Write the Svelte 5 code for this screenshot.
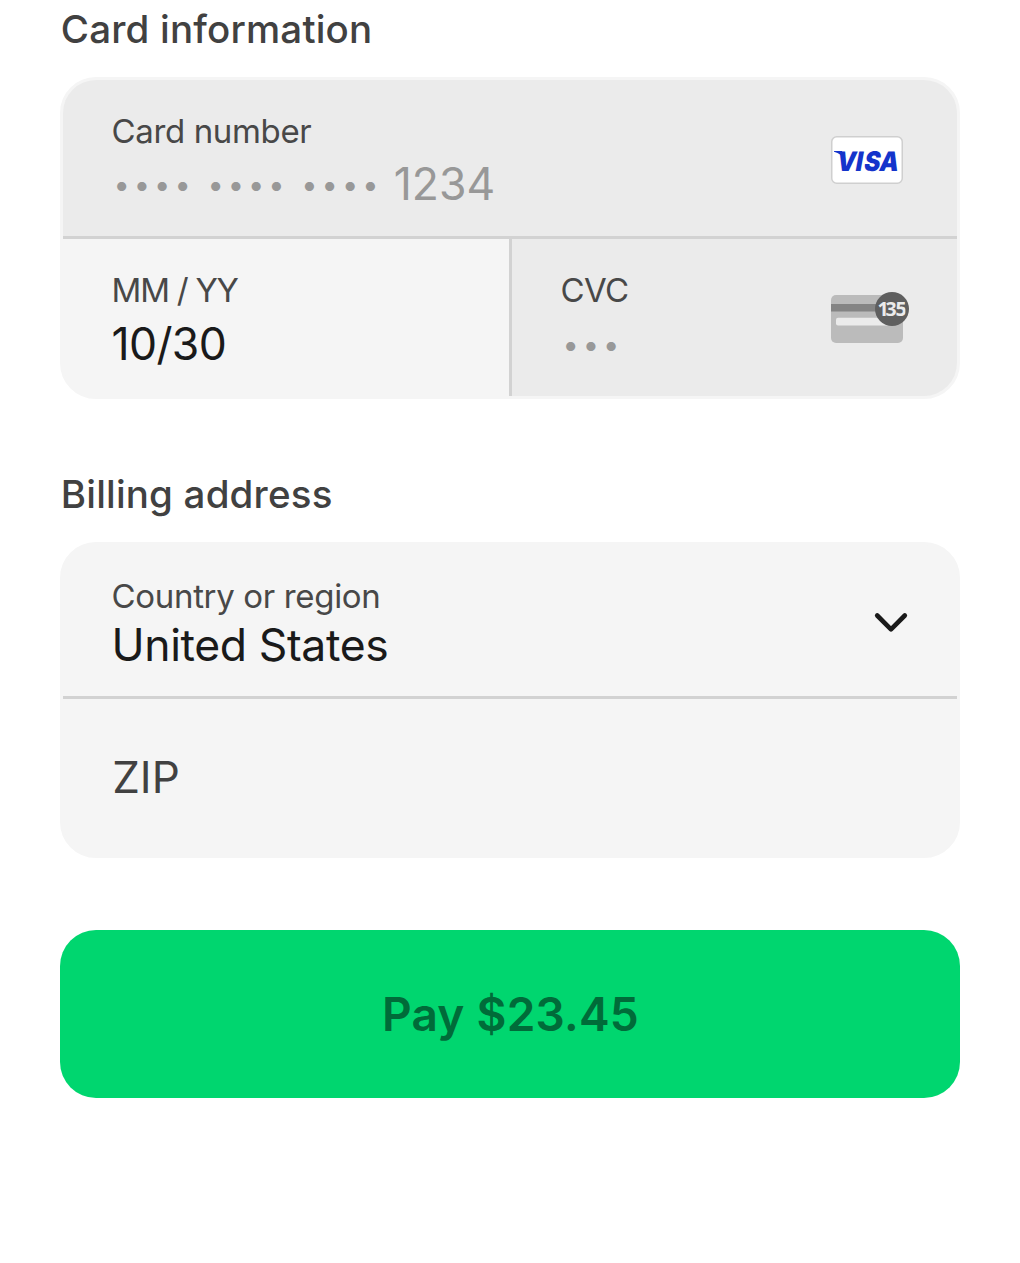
<script>
  const card = { last4: '1234', expiry: '10/30' };
  const billing = { country: 'United States' };
  const total = '$23.45';
</script>

<main class="checkout">
  <section>
    <h2>Card information</h2>
    <div class="group">
      <div class="field locked number">
        <div class="text">
          <span class="label">Card number</span>
          <span class="value masked">
            <span class="dots">•••• •••• ••••</span>
            <span class="digits">{card.last4}</span>
          </span>
        </div>
        <svg class="brand" width="72" height="48" viewBox="0 0 72 48" aria-label="Visa">
          <rect x="0.75" y="0.75" width="70.5" height="46.5" rx="5" fill="#fff" stroke="#cfcfcf" stroke-width="1.5" />
          <path d="M3 15H11L14 24Q10.5 17.6 3 15.8Z" fill="#1434cb" />
          <text class="visa" transform="matrix(0.9 0 -0.18 1 0 34.7)" x="5 26.2 35.6 52.4" y="0">VISA</text>
        </svg>
      </div>
      <div class="split">
        <div class="field expiry">
          <div class="text">
            <span class="label mmyy">MM / YY</span>
            <span class="value date">{card.expiry}</span>
          </div>
        </div>
        <div class="field locked cvc">
          <div class="text">
            <span class="label code">CVC</span>
            <span class="value masked"><span class="dots">•••</span></span>
          </div>
          <svg class="brand" width="72" height="48" viewBox="0 0 72 48" aria-hidden="true">
            <defs>
              <clipPath id="badge-clip"><rect x="44" y="0" width="30.5" height="30" /></clipPath>
            </defs>
            <rect width="72" height="48" rx="5" fill="#bbbbbb" />
            <rect y="9" width="72" height="7.5" fill="#848484" />
            <rect x="5" y="22.8" width="55" height="7.7" rx="2" fill="#ebebeb" />
            <circle cx="61" cy="14" r="17" fill="#5f5f5f" />
            <g clip-path="url(#badge-clip)">
              <text class="badge" x="46.4 54.6 64.6" y="21.2">135</text>
            </g>
          </svg>
        </div>
      </div>
    </div>
  </section>

  <section class="billing">
    <h2>Billing address</h2>
    <div class="group">
      <div class="field country">
        <div class="text">
          <span class="label region">Country or region</span>
          <span class="value">{billing.country}</span>
        </div>
        <svg class="chevron" width="36" height="24" viewBox="0 0 36 24" aria-hidden="true">
          <path d="M4.2 4.5L18 18.3L31.8 4.5" />
        </svg>
      </div>
      <div class="field zip">
        <span class="placeholder">ZIP</span>
      </div>
    </div>
  </section>

  <button type="button">Pay {total}</button>
</main>

<style>
  :global(body) {
    background: #fff;
  }

  .checkout {
    box-sizing: border-box;
    height: 1263px;
    padding: 9px 60px 0;
    font-family: Inter, 'Liberation Sans', sans-serif;
  }

  h2 {
    margin: 0 0 28px;
    padding-left: 0.8px;
    font-size: 38.5px;
    line-height: 40px;
    font-weight: 500;
    letter-spacing: 0.18px;
    color: #414141;
    white-space: nowrap;
  }

  .group {
    border: 3px solid #f5f5f5;
    border-radius: 36px;
    overflow: hidden;
    background: #f5f5f5;
  }

  .billing {
    margin-top: 75px;
  }

  .field {
    box-sizing: border-box;
    display: flex;
    align-items: flex-start;
    justify-content: space-between;
    padding: 31px 54px 0 48.6px;
  }

  .locked {
    background: #ebebeb;
  }

  .number {
    height: 159px;
    border-bottom: 3px solid #d2d2d2;
  }

  .split {
    display: grid;
    grid-template-columns: 446px 1fr;
    height: 157px;
  }

  .cvc {
    border-left: 3px solid #d2d2d2;
  }

  .text {
    display: flex;
    flex-direction: column;
    white-space: nowrap;
  }

  .label {
    font-size: 33px;
    line-height: 40px;
    letter-spacing: -0.37px;
    color: #484848;
  }

  .label.mmyy {
    letter-spacing: -1.25px;
  }

  .label.code {
    letter-spacing: -0.63px;
  }

  .label.region {
    letter-spacing: -0.34px;
  }

  .value {
    margin-top: 8px;
    font-size: 44.5px;
    line-height: 50px;
    letter-spacing: -0.4px;
    color: #1a1a1a;
  }

  .date {
    margin-top: 9px;
    letter-spacing: -0.65px;
  }

  .masked {
    display: flex;
    color: #989898;
  }

  .dots {
    padding-left: 1.9px;
    font-size: 29px;
    line-height: 52px;
    letter-spacing: 4px;
    word-spacing: 0.5px;
  }

  .cvc .masked {
    margin-top: 9px;
  }

  .digits {
    margin-left: 11.2px;
    letter-spacing: 0;
  }

  .brand {
    flex: none;
    margin-top: 25px;
    overflow: visible;
  }

  .visa {
    font: 900 27px Inter, sans-serif;
    fill: #1434cb;
  }

  .badge {
    font: 700 19.5px 'Noto Sans', sans-serif;
    fill: #ebebeb;
  }

  .country {
    height: 154px;
    padding-top: 30.5px;
    padding-right: 48px;
    border-bottom: 3px solid #d2d2d2;
  }

  .country .value {
    margin-top: 4.9px;
  }

  .chevron {
    margin-top: 35.5px;
    fill: none;
    stroke: #1a1a1a;
    stroke-width: 4.6;
    stroke-linecap: round;
    stroke-linejoin: round;
  }

  .zip {
    height: 156px;
    padding-top: 53px;
  }

  .placeholder {
    padding-left: 0.6px;
    font-size: 44px;
    line-height: 50px;
    letter-spacing: 0;
    color: #414141;
  }

  button {
    display: block;
    width: 900px;
    height: 168px;
    margin-top: 72px;
    padding: 0 0 0 1px;
    border: 0;
    border-radius: 36px;
    background: #00d66f;
    color: #006b39;
    font: 600 46px/56px Inter, 'Liberation Sans', sans-serif;
    letter-spacing: 0.24px;
  }
</style>
